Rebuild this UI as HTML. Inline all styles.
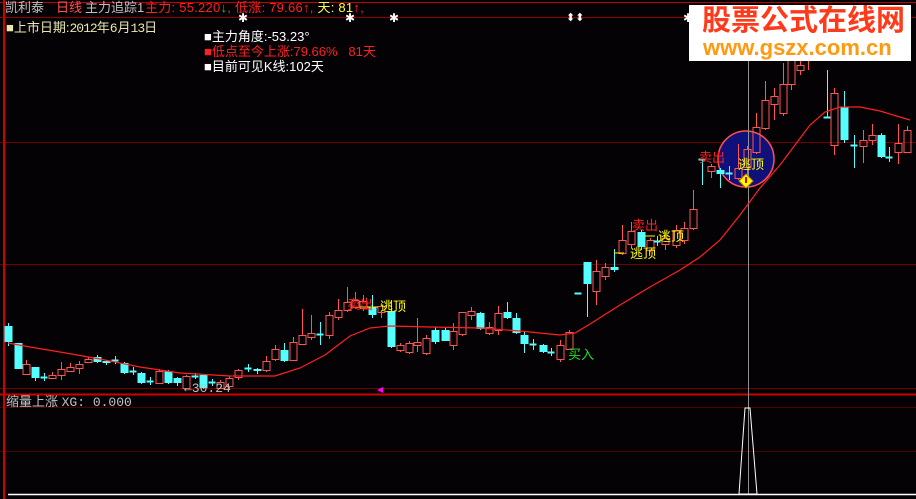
<!DOCTYPE html>
<html><head><meta charset="utf-8">
<style>
body{margin:0;background:#000;width:916px;height:499px;overflow:hidden;position:relative;font-family:"Liberation Sans","Noto Sans CJK SC",sans-serif;}
.t{position:absolute;font-size:13px;line-height:14px;white-space:nowrap;}
.m{font-family:"Liberation Mono","Noto Sans CJK SC",monospace;font-size:13px;}
svg{position:absolute;left:0;top:0;}
</style></head><body>
<svg id="s" width="916" height="499" xmlns="http://www.w3.org/2000/svg">
<rect width="916" height="499" fill="#050205"/>
<line x1="0" y1="2.5" x2="916" y2="2.5" stroke="#c00000"/>
<line x1="0" y1="17.5" x2="916" y2="17.5" stroke="#900000"/>
<line x1="0" y1="142.5" x2="916" y2="142.5" stroke="#700000"/>
<line x1="0" y1="264.5" x2="916" y2="264.5" stroke="#700000"/>
<line x1="0" y1="388.5" x2="916" y2="388.5" stroke="#700000"/>
<line x1="0" y1="394.5" x2="916" y2="394.5" stroke="#d00000" stroke-width="2"/>
<line x1="0" y1="407.5" x2="916" y2="407.5" stroke="#500000"/>
<line x1="0" y1="451.5" x2="916" y2="451.5" stroke="#500000"/>
<line x1="4" y1="0" x2="4" y2="499" stroke="#d00000" stroke-width="2"/>
<circle cx="746" cy="159" r="28" fill="#10107a" stroke="#ff5050" stroke-width="1.5"/>
<line x1="748.5" y1="18" x2="748.5" y2="494" stroke="#909090"/>
<g id="c"></g>
<polyline id="ma" fill="none" stroke="#ff2020" stroke-width="1.2" points="8,343 30,347 60,352 100,359 140,367 180,373 230,376 275,376 300,368 325,355 350,336 370,328 390,326 430,327 480,328 520,331 560,335 575,333 590,324 620,305 650,287 680,270 700,257 720,240 740,215 760,188 780,165 795,145 810,125 825,112 840,107 860,107 880,111 900,117 910,120"/>
<polygon points="745,408 750,408 757,494 739,494" fill="none" stroke="#fff"/>
<line x1="8" y1="494.5" x2="916" y2="494.5" stroke="#fff" stroke-width="1.5"/>
<polygon points="377,390 383,387 383,393" fill="#ff00ff"/>
<polygon points="746,174 753,181 746,188 739,181" fill="#ffff00" stroke="#c08000"/>
<line x1="746" y1="177" x2="746" y2="183" stroke="#e00000" stroke-width="2"/>
<line x1="614" y1="253" x2="624" y2="253" stroke="#ffff00"/>
<line x1="645" y1="236" x2="655" y2="236" stroke="#ffff00"/>
<line x1="360" y1="307" x2="378" y2="307" stroke="#ffff00"/>
<rect x="689" y="5" width="222" height="56" fill="#fff"/>
</svg>
<div class="t" style="left:5px;top:1px;color:#c0c0c0">凯利泰</div>
<div class="t" style="left:56px;top:1px;color:#ff5050">日线</div>
<div class="t" style="left:85px;top:1px;color:#c0c0c0">主力追踪1</div>
<div class="t" style="left:145px;top:1px;color:#ff2020;letter-spacing:0.25px">主力: 55.220<span style="color:#00e000">↓</span>, 低涨: 79.66↑, <span style="color:#ffff40">天: 81</span>↑,</div>
<div class="t" style="left:238px;top:11px;color:#fff;font-size:12px">✱</div>
<div class="t" style="left:345px;top:11px;color:#fff;font-size:12px">✱</div>
<div class="t" style="left:389px;top:11px;color:#fff;font-size:12px">✱</div>
<div class="t" style="left:566px;top:11px;color:#fff;font-size:11px">⬍⬍</div>
<div class="t" style="left:683px;top:11px;color:#fff;font-size:12px">✱</div>
<div class="t" style="left:6px;top:21px;color:#e8e8b0">■上市日期:<span class="m" style="letter-spacing:-1px">2012</span>年<span class="m">6</span>月<span class="m" style="letter-spacing:-1px">13</span>日</div>
<div class="t" style="left:204px;top:30px;color:#fff">■主力角度:-53.23°</div>
<div class="t" style="left:204px;top:45px;color:#ff2020">■低点至今上涨:79.66%&nbsp;&nbsp;&nbsp;81天</div>
<div class="t" style="left:204px;top:60px;color:#fff">■目前可见K线:102天</div>
<div class="t" style="left:702px;top:4px;color:#ff3a1a;font-size:29px;line-height:34px;font-weight:bold;letter-spacing:0px">股票公式在线网</div>
<div class="t" style="left:703px;top:35px;color:#ff9a10;font-size:22px;line-height:26px;font-weight:bold">www.gszx.com.cn</div>
<div class="t" style="left:6px;top:395px;color:#c0c0c0">缩量上涨 <span class="m">XG: 0.000</span></div>
<div class="t m" style="left:184px;top:382px;color:#c0c0c0">←30.24</div>
<div class="t" style="left:347px;top:298px;color:#ff2020">卖出</div>
<div class="t" style="left:380px;top:300px;color:#ffff00">逃顶</div>
<div class="t" style="left:632px;top:219px;color:#ff2020">卖出</div>
<div class="t" style="left:658px;top:230px;color:#ffff00">逃顶</div>
<div class="t" style="left:630px;top:247px;color:#ffff00">逃顶</div>
<div class="t" style="left:699px;top:151px;color:#ff2020">卖出</div>
<div class="t" style="left:738px;top:158px;color:#ffff00">逃顶</div>
<div class="t" style="left:568px;top:348px;color:#20e020">买入</div>
<script>
var d=[[8,326,342,323,346],[18,343,369,343,369],[26,374,364,360,375],[35,367,378,367,381],[44,377,377,373,381],[52,378,375,372,379],[61,375,369,362,380],[70,371,367,363,372],[79,368,364,361,374],[88,362,359,357,363],[97,357,362,355,363],[106,361,363,360,365],[115,360,360,356,364],[124,363,373,362,374],[133,371,371,367,375],[141,373,383,372,384],[150,381,381,377,385],[159,383,371,369,384],[168,371,383,370,384],[177,378,383,377,386],[186,388,376,375,389],[195,376,376,373,379],[203,375,388,374,389],[212,382,382,379,386],[220,388,382,380,389],[229,386,378,376,390],[238,377,370,369,380],[248,368,368,364,372],[257,369,371,368,374],[266,370,361,356,372],[275,359,349,345,361],[284,350,361,343,362],[293,360,342,337,361],[302,344,335,309,345],[311,337,333,315,340],[320,334,334,322,345],[329,335,315,312,339],[338,317,310,299,320],[347,310,302,287,312],[355,307,300,292,309],[363,308,301,295,311],[372,307,315,295,318],[381,312,306,303,318],[391,311,347,300,348],[400,350,345,343,352],[409,352,343,341,354],[417,345,342,318,352],[426,353,338,335,355],[435,330,342,327,344],[445,330,341,328,341],[453,345,331,323,350],[462,334,312,312,336],[471,315,311,307,320],[480,313,329,312,330],[489,333,327,322,335],[498,330,313,306,335],[507,312,318,302,319],[516,318,333,313,334],[524,335,344,331,353],[533,344,344,339,350],[543,345,352,344,353],[551,352,352,348,356],[560,359,345,340,362],[569,349,332,330,350],[578,293,293,293,293],[587,262,284,262,317],[596,291,271,260,305],[605,276,267,263,280],[614,267,270,249,272],[622,253,240,225,255],[631,244,231,222,248],[641,232,247,230,250],[650,250,240,238,252],[657,241,241,236,246],[665,244,238,232,250],[676,245,230,225,248],[684,240,228,222,244],[693,228,209,190,230],[702,159,159,159,185],[711,171,166,164,178],[720,170,174,168,188],[729,173,173,166,180],[738,178,168,144,180],[747,167,149,146,180],[756,152,127,113,154],[765,128,100,81,130],[774,104,96,88,120],[783,113,84,63,116],[791,84,60,55,90],[800,70,65,55,75],[808,60,55,50,70],[827,117,117,70,118],[834,145,93,88,155],[844,107,140,91,143],[854,145,145,135,168],[863,146,140,130,163],[872,140,135,124,145],[881,135,157,133,158],[889,157,157,147,162],[898,152,143,124,164],[907,152,130,126,153]];
var g=document.getElementById('c'),h='';
d.forEach(function(a){var x=a[0],o=a[1],c=a[2],hi=a[3],lo=a[4];var up=c<o,col=up?'#ff5454':'#54ffff';var t=Math.min(o,c),b=Math.max(o,c);
if(b-t<1.5){h+='<line x1="'+(x-3.5)+'" y1="'+(t+.5)+'" x2="'+(x+3.5)+'" y2="'+(t+.5)+'" stroke="'+col+'" stroke-width="2"/>';h+='<line x1="'+(x+.5)+'" y1="'+hi+'" x2="'+(x+.5)+'" y2="'+lo+'" stroke="'+col+'"/>';return;}
h+='<line x1="'+(x+.5)+'" y1="'+hi+'" x2="'+(x+.5)+'" y2="'+t+'" stroke="'+col+'"/><line x1="'+(x+.5)+'" y1="'+b+'" x2="'+(x+.5)+'" y2="'+lo+'" stroke="'+col+'"/>';
if(up)h+='<rect x="'+(x-3)+'" y="'+(t+.5)+'" width="7" height="'+(b-t)+'" fill="none" stroke="'+col+'"/>';
else h+='<rect x="'+(x-3.5)+'" y="'+t+'" width="8" height="'+(b-t)+'" fill="'+col+'"/>';});
g.innerHTML=h;
</script>
</body></html>
